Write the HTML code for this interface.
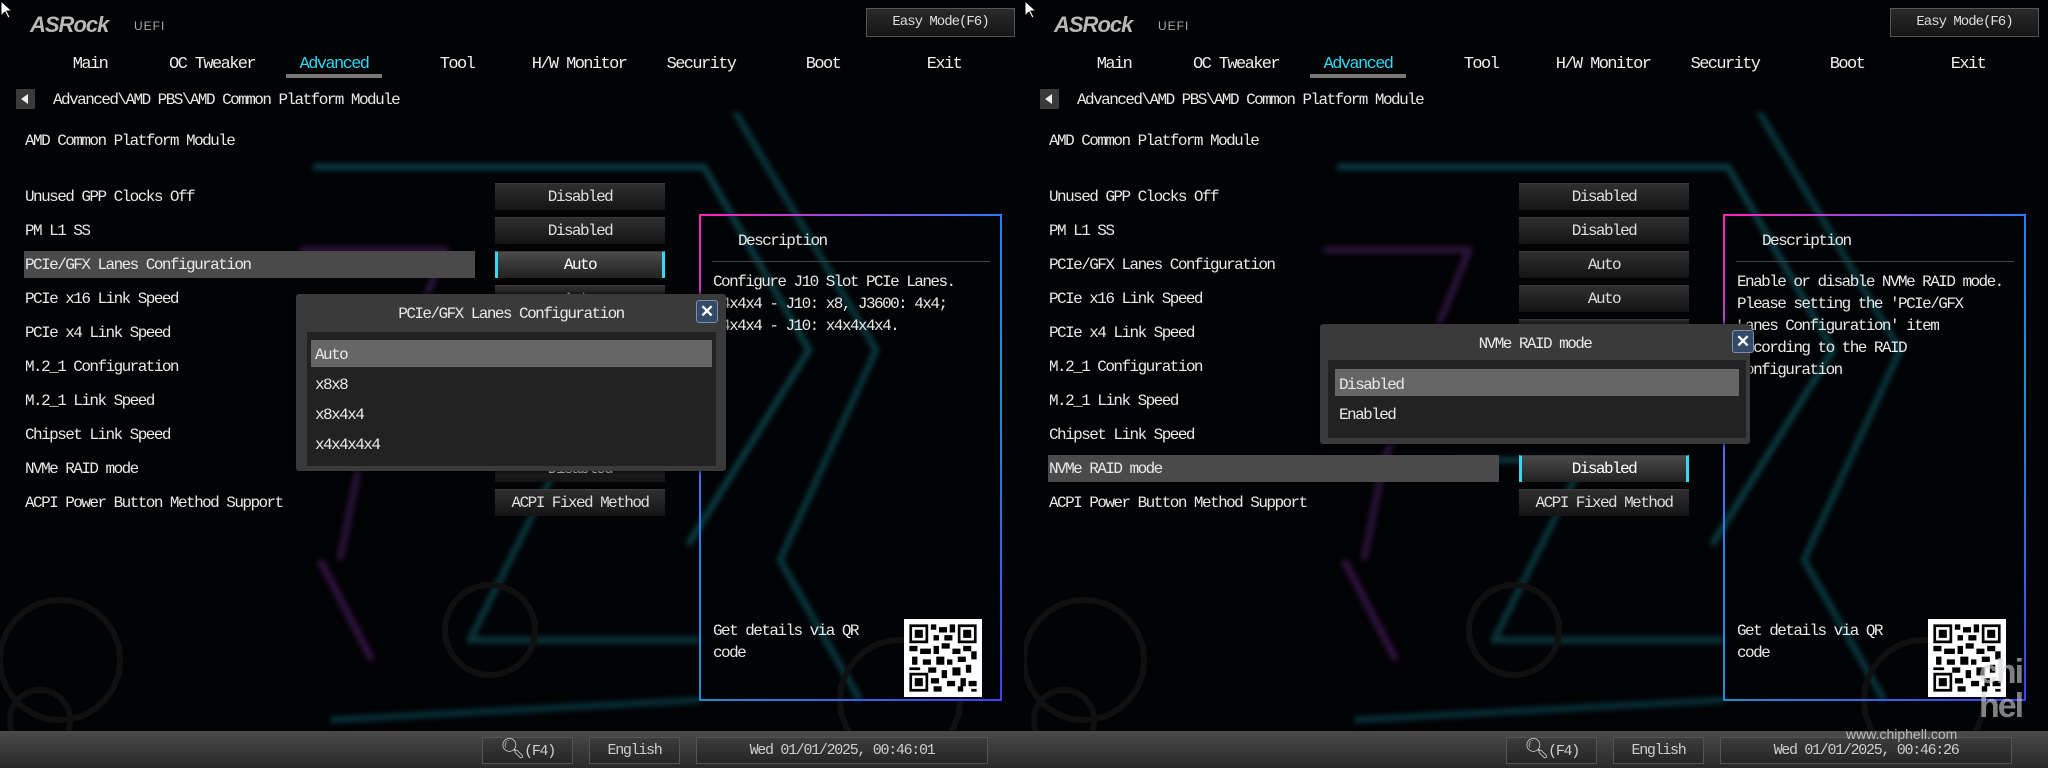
<!DOCTYPE html>
<html><head><meta charset="utf-8">
<style>
*{margin:0;padding:0;box-sizing:border-box}
body{width:2048px;height:768px;background:#000;overflow:hidden;position:relative;font-family:"Liberation Mono","DejaVu Sans Mono",monospace;color:#e8e8e8}
.half{position:absolute;top:0;width:1024px;height:768px;overflow:hidden;background:#020305}
.t{position:absolute;font-size:16px;letter-spacing:-1.55px;white-space:nowrap;line-height:18px;margin-top:1px}
.bg{position:absolute;left:0;top:0;filter:blur(3px)}
.gears{position:absolute;left:0;top:0}
.logo{position:absolute;left:30px;top:12px;font-family:"Liberation Sans",sans-serif;font-weight:bold;font-style:italic;font-size:22px;color:#b8b8b8;letter-spacing:-1px}
.uefi{position:absolute;left:134px;top:19px;font-family:"Liberation Sans",sans-serif;font-size:12px;color:#aaa;letter-spacing:1px}
.easy{position:absolute;left:866px;top:8px;width:149px;height:29px;border:1px solid #555;background:linear-gradient(#2a2a2a,#151515);font-size:14px;letter-spacing:-1px;text-align:center;line-height:27px;color:#ddd}
.tab{position:absolute;top:55px;font-size:17px;letter-spacing:-1.6px;color:#eee;transform:translateX(-50%)}
.tab.a{color:#2fd7f0}
.ul{position:absolute;left:286px;top:74px;width:96px;height:4px;background:#777}
.back{position:absolute;left:16px;top:89px;width:19px;height:20px;background:#3a3a3a}
.back:after{content:"";position:absolute;left:5px;top:5px;border-right:7px solid #eee;border-top:5px solid transparent;border-bottom:5px solid transparent}
.val{position:absolute;left:495px;width:170px;height:27px;background:linear-gradient(#303030,#141414);border-top:1px solid #3a3a3a;font-size:16px;letter-spacing:-1.55px;text-align:center;line-height:27px;color:#ddd}
.val.sel{background:linear-gradient(#4a4a4a,#222);border-left:3px solid #3ad8f0;border-right:3px solid #3ad8f0;color:#fff}
.hl{position:absolute;left:24px;width:451px;height:27px;background:#4a4a4a}
.desc{position:absolute;left:699px;top:214px;width:303px;height:487px;border:2px solid;border-image:linear-gradient(135deg,#ff20c0,#2080ff 40%,#2090d0 60%,#4040ff) 1}
.sep{position:absolute;left:712px;top:261px;width:278px;height:1px;background:#444}
.pop{position:absolute;background:#3a3a3a;border-radius:3px;box-shadow:0 0 6px #000}
.list{position:absolute;background:#222}
.close{position:absolute;width:22px;height:23px;background:#334a66;border:1px solid #7890b0;border-radius:3px;color:#fff;font-family:"Liberation Sans",sans-serif;font-weight:bold;font-size:17px;text-align:center;line-height:21px}
.bar{position:absolute;left:0;top:731px;width:1024px;height:37px;background:linear-gradient(#4a4a4a,#2a2a2a)}
.bb{position:absolute;top:737px;height:27px;border:1px solid #555;background:linear-gradient(#3c3c3c,#262626);font-size:15px;letter-spacing:-1.3px;text-align:center;line-height:25px;color:#ccc}
.qr{position:absolute;left:904px;top:619px;width:78px;height:78px;background:#fff}
.cur{position:absolute;left:0;top:0}
</style></head><body>

<!-- LEFT HALF -->
<div class="half" style="left:0">
<svg class="bg" width="1024" height="768">
 <g fill="none" stroke-width="6" opacity=".45">
  <polyline points="313,167 704,167 809,350 688,545" stroke="#1a8a9a"/>
  <polyline points="735,112 876,350 780,560 860,700" stroke="#138090"/>
  <polyline points="300,250 445,250 360,460 340,560" stroke="#6a2a8a"/>
  <polyline points="430,460 560,460 470,640 700,640" stroke="#1a7a8a"/>
  <polyline points="320,560 372,660" stroke="#7a2a9a"/>
  <polyline points="330,720 700,700" stroke="#107080"/>
 </g>
</svg>
<svg class="gears" width="1024" height="768">
 <g fill="none" stroke="#101010" stroke-width="6">
  <circle cx="60" cy="660" r="60"/><circle cx="40" cy="720" r="30"/>
  <circle cx="490" cy="630" r="45"/><circle cx="900" cy="700" r="60"/>
 </g>
</svg>
<svg class="cur" width="14" height="20"><path d="M1 1 L1 16 L5 12 L8 18 L10 17 L7 11 L12 11 Z" fill="#fff" stroke="#000"/></svg>
<div class="logo">ASRock</div><div class="uefi">UEFI</div>
<div class="easy">Easy Mode(F6)</div>
<div class="tab" style="left:90px">Main</div>
<div class="tab" style="left:212px">OC Tweaker</div>
<div class="tab a" style="left:334px">Advanced</div>
<div class="tab" style="left:457px">Tool</div>
<div class="tab" style="left:579px">H/W Monitor</div>
<div class="tab" style="left:701px">Security</div>
<div class="tab" style="left:823px">Boot</div>
<div class="tab" style="left:944px">Exit</div>
<div class="ul"></div>
<div class="back"></div>
<div class="t" style="left:53px;top:90px">Advanced\AMD PBS\AMD Common Platform Module</div>
<div class="t" style="left:25px;top:131px">AMD Common Platform Module</div>

<div class="hl" style="top:251px"></div>
<div class="t" style="left:25px;top:187px">Unused GPP Clocks Off</div>
<div class="t" style="left:25px;top:221px">PM L1 SS</div>
<div class="t" style="left:25px;top:255px">PCIe/GFX Lanes Configuration</div>
<div class="t" style="left:25px;top:289px">PCIe x16 Link Speed</div>
<div class="t" style="left:25px;top:323px">PCIe x4 Link Speed</div>
<div class="t" style="left:25px;top:357px">M.2_1 Configuration</div>
<div class="t" style="left:25px;top:391px">M.2_1 Link Speed</div>
<div class="t" style="left:25px;top:425px">Chipset Link Speed</div>
<div class="t" style="left:25px;top:459px">NVMe RAID mode</div>
<div class="t" style="left:25px;top:493px">ACPI Power Button Method Support</div>
<div class="val" style="top:183px">Disabled</div>
<div class="val" style="top:217px">Disabled</div>
<div class="val sel" style="top:251px">Auto</div>
<div class="val" style="top:285px">Auto</div>
<div class="val" style="top:455px">Disabled</div>
<div class="val" style="top:489px">ACPI Fixed Method</div>

<div class="desc"></div>
<div class="t" style="left:738px;top:231px">Description</div>
<div class="sep"></div>
<div class="t" style="left:713px;top:270px;line-height:22px">Configure J10 Slot PCIe Lanes.<br>x4x4x4 - J10: x8, J3600: 4x4;<br>x4x4x4 - J10: x4x4x4x4.</div>
<div class="t" style="left:713px;top:619px;line-height:22px">Get details via QR<br>code</div>
<svg class="qr" viewBox="0 0 29 29"><g fill="#000"><path d="M2 2h7v7h-7zM20 2h7v7h-7zM2 20h7v7h-7z"/></g><g fill="#fff"><path d="M3 3h5v5h-5zM21 3h5v5h-5zM3 21h5v5h-5z"/></g><g fill="#000"><path d="M4 4h3v3h-3zM22 4h3v3h-3zM4 22h3v3h-3zM10 2h2v2h-2zM13 3h3v2h-3zM17 2h2v3h-2zM11 6h2v2h-2zM15 6h3v2h-3zM2 10h3v2h-3zM6 11h4v2h-4zM11 10h2v3h-2zM14 9h3v2h-3zM18 11h3v2h-3zM22 10h3v2h-3zM25 12h2v3h-2zM3 14h2v3h-2zM7 15h3v2h-3zM12 14h3v3h-3zM16 15h2v2h-2zM20 14h3v2h-3zM2 18h4v1h-4zM9 18h3v2h-3zM14 19h2v3h-2zM18 18h3v3h-3zM23 17h2v3h-2zM10 22h3v2h-3zM16 23h3v2h-3zM21 22h2v3h-2zM24 23h3v2h-3zM11 25h3v2h-3zM20 25h2v2h-2zM25 26h2v1h-2z"/></g></svg>

<div class="pop" style="left:296px;top:294px;width:430px;height:177px"></div>
<div class="t" style="left:296px;width:430px;text-align:center;top:304px">PCIe/GFX Lanes Configuration</div>
<div class="close" style="left:696px;top:300px">✕</div>
<div class="list" style="left:307px;top:332px;width:409px;height:134px"></div>
<div style="position:absolute;left:311px;top:340px;width:401px;height:27px;background:#666"></div>
<div class="t" style="left:315px;top:345px">Auto</div>
<div class="t" style="left:315px;top:375px">x8x8</div>
<div class="t" style="left:315px;top:405px">x8x4x4</div>
<div class="t" style="left:315px;top:435px">x4x4x4x4</div>

<div class="bar"></div>
<div class="bb" style="left:482px;width:91px"><span style="font-size:20px">&#x1F50D;&#xFE0E;</span>(F4)</div>
<div class="bb" style="left:589px;width:91px">English</div>
<div class="bb" style="left:696px;width:292px">Wed 01/01/2025, 00:46:01</div>
</div>

<!-- RIGHT HALF -->
<div class="half" style="left:1024px">
<svg class="bg" width="1024" height="768">
 <g fill="none" stroke-width="6" opacity=".45">
  <polyline points="313,167 704,167 809,350 688,545" stroke="#1a8a9a"/>
  <polyline points="735,112 876,350 780,560 860,700" stroke="#138090"/>
  <polyline points="300,250 445,250 360,460 340,560" stroke="#6a2a8a"/>
  <polyline points="430,460 560,460 470,640 700,640" stroke="#1a7a8a"/>
  <polyline points="320,560 372,660" stroke="#7a2a9a"/>
  <polyline points="330,720 700,700" stroke="#107080"/>
 </g>
</svg>
<svg class="gears" width="1024" height="768">
 <g fill="none" stroke="#101010" stroke-width="6">
  <circle cx="60" cy="660" r="60"/><circle cx="40" cy="720" r="30"/>
  <circle cx="490" cy="630" r="45"/><circle cx="900" cy="700" r="60"/>
 </g>
</svg>
<svg class="cur" width="14" height="20"><path d="M1 1 L1 16 L5 12 L8 18 L10 17 L7 11 L12 11 Z" fill="#fff" stroke="#000"/></svg>
<div class="logo">ASRock</div><div class="uefi">UEFI</div>
<div class="easy">Easy Mode(F6)</div>
<div class="tab" style="left:90px">Main</div>
<div class="tab" style="left:212px">OC Tweaker</div>
<div class="tab a" style="left:334px">Advanced</div>
<div class="tab" style="left:457px">Tool</div>
<div class="tab" style="left:579px">H/W Monitor</div>
<div class="tab" style="left:701px">Security</div>
<div class="tab" style="left:823px">Boot</div>
<div class="tab" style="left:944px">Exit</div>
<div class="ul"></div>
<div class="back"></div>
<div class="t" style="left:53px;top:90px">Advanced\AMD PBS\AMD Common Platform Module</div>
<div class="t" style="left:25px;top:131px">AMD Common Platform Module</div>

<div class="hl" style="top:455px"></div>
<div class="t" style="left:25px;top:187px">Unused GPP Clocks Off</div>
<div class="t" style="left:25px;top:221px">PM L1 SS</div>
<div class="t" style="left:25px;top:255px">PCIe/GFX Lanes Configuration</div>
<div class="t" style="left:25px;top:289px">PCIe x16 Link Speed</div>
<div class="t" style="left:25px;top:323px">PCIe x4 Link Speed</div>
<div class="t" style="left:25px;top:357px">M.2_1 Configuration</div>
<div class="t" style="left:25px;top:391px">M.2_1 Link Speed</div>
<div class="t" style="left:25px;top:425px">Chipset Link Speed</div>
<div class="t" style="left:25px;top:459px">NVMe RAID mode</div>
<div class="t" style="left:25px;top:493px">ACPI Power Button Method Support</div>
<div class="val" style="top:183px">Disabled</div>
<div class="val" style="top:217px">Disabled</div>
<div class="val" style="top:251px">Auto</div>
<div class="val" style="top:285px">Auto</div>
<div class="val" style="top:319px;color:#666">Auto</div>
<div class="val sel" style="top:455px">Disabled</div>
<div class="val" style="top:489px">ACPI Fixed Method</div>

<div class="desc"></div>
<div class="t" style="left:738px;top:231px">Description</div>
<div class="sep"></div>
<div class="t" style="left:713px;top:270px;line-height:22px">Enable or disable NVMe RAID mode.<br>Please setting the 'PCIe/GFX<br>Lanes Configuration' item<br>according to the RAID<br>configuration</div>
<div class="t" style="left:713px;top:619px;line-height:22px">Get details via QR<br>code</div>
<svg class="qr" viewBox="0 0 29 29"><g fill="#000"><path d="M2 2h7v7h-7zM20 2h7v7h-7zM2 20h7v7h-7z"/></g><g fill="#fff"><path d="M3 3h5v5h-5zM21 3h5v5h-5zM3 21h5v5h-5z"/></g><g fill="#000"><path d="M4 4h3v3h-3zM22 4h3v3h-3zM4 22h3v3h-3zM10 2h2v2h-2zM13 3h3v2h-3zM17 2h2v3h-2zM11 6h2v2h-2zM15 6h3v2h-3zM2 10h3v2h-3zM6 11h4v2h-4zM11 10h2v3h-2zM14 9h3v2h-3zM18 11h3v2h-3zM22 10h3v2h-3zM25 12h2v3h-2zM3 14h2v3h-2zM7 15h3v2h-3zM12 14h3v3h-3zM16 15h2v2h-2zM20 14h3v2h-3zM2 18h4v1h-4zM9 18h3v2h-3zM14 19h2v3h-2zM18 18h3v3h-3zM23 17h2v3h-2zM10 22h3v2h-3zM16 23h3v2h-3zM21 22h2v3h-2zM24 23h3v2h-3zM11 25h3v2h-3zM20 25h2v2h-2zM25 26h2v1h-2z"/></g></svg>

<div class="pop" style="left:1320px;left:296px;top:324px;width:430px;height:120px"></div>
<div class="t" style="left:296px;width:430px;text-align:center;top:334px">NVMe RAID mode</div>
<div class="close" style="left:708px;top:330px">✕</div>
<div class="list" style="left:304px;top:360px;width:418px;height:78px"></div>
<div style="position:absolute;left:311px;top:369px;width:404px;height:27px;background:#666"></div>
<div class="t" style="left:315px;top:375px">Disabled</div>
<div class="t" style="left:315px;top:405px">Enabled</div>

<div class="bar"></div>
<div class="bb" style="left:482px;width:91px"><span style="font-size:20px">&#x1F50D;&#xFE0E;</span>(F4)</div>
<div class="bb" style="left:589px;width:91px">English</div>
<div class="bb" style="left:696px;width:292px">Wed 01/01/2025, 00:46:26</div>
<div style="position:absolute;left:822px;top:726px;font-family:'Liberation Sans',sans-serif;font-size:14px;color:#bbb">www.chiphell.com</div>
<div style="position:absolute;left:955px;top:655px;font-family:'Liberation Sans',sans-serif;font-weight:bold;font-size:34px;line-height:34px;color:rgba(210,210,210,.6);width:60px;letter-spacing:-2px">chi<br>hel</div>
</div>
</body></html>
